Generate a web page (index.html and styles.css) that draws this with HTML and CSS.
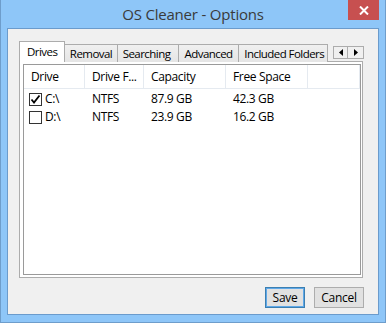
FILE: index.html
```html
<!DOCTYPE html>
<html lang="en">
<head>
    <meta charset="UTF-8">
    <title>OS Cleaner - Options</title>
    <link rel="stylesheet" href="styles.css">
</head>
<body>
    <div class="window">
        <div class="titlebar">
            <span></span>
            <span class="title">OS Cleaner - Options</span>
            <button class="close">
                <svg width="10" height="9" viewBox="0 0 10 9"><path d="M1 0.5 L9 8.5 M9 0.5 L1 8.5" stroke="#fff" stroke-width="2"/></svg>
            </button>
        </div>
        <div class="client">
            <div class="tabstrip">
                <div class="tab active">Drives</div>
                <div class="tab">Removal</div>
                <div class="tab">Searching</div>
                <div class="tab">Advanced</div>
                <div class="tab">Included Folders</div>
                <div class="arrows">
                    <span class="arrow"><svg width="4" height="7" viewBox="0 0 4 7"><path d="M4 0 L0 3.5 L4 7 Z" fill="#000"/></svg></span>
                    <span class="arrow"><svg width="4" height="7" viewBox="0 0 4 7"><path d="M0 0 L4 3.5 L0 7 Z" fill="#000"/></svg></span>
                </div>
            </div>
            <div class="panel">
                <div class="listview">
                    <div class="row header">
                        <div class="cell">Drive</div>
                        <div class="cell">Drive F...</div>
                        <div class="cell">Capacity</div>
                        <div class="cell">Free Space</div>
                        <div class="cell"></div>
                    </div>
                    <div class="row">
                        <div class="cell"><span class="check"><svg width="11" height="11" viewBox="0 0 11 11"><path d="M1.5 5.5 L4 8.5 L9.5 1.5" stroke="#000" stroke-width="1.8" fill="none"/></svg></span>C:\</div>
                        <div class="cell">NTFS</div>
                        <div class="cell">87.9 GB</div>
                        <div class="cell">42.3 GB</div>
                        <div class="cell"></div>
                    </div>
                    <div class="row">
                        <div class="cell"><span class="check"></span>D:\</div>
                        <div class="cell">NTFS</div>
                        <div class="cell">23.9 GB</div>
                        <div class="cell">16.2 GB</div>
                        <div class="cell"></div>
                    </div>
                </div>
            </div>
            <div class="actions">
                <button class="btn default">Save</button>
                <button class="btn cancel">Cancel</button>
            </div>
        </div>
    </div>
</body>
</html>
```

FILE: styles.css
```css
* {
    margin: 0;
    padding: 0;
    box-sizing: border-box;
    font-family: 'Open Sans', 'Noto Sans', sans-serif;
}

body {
    width: 386px;
    height: 323px;
    overflow: hidden;
}

.window {
    display: flex;
    flex-direction: column;
    height: 323px;
    background: #8ec6f8;
    border: 1px solid #6e9dcb;
    border-top: none;
    padding: 0 6px 7px 6px;
}

.titlebar {
    display: grid;
    grid-template-columns: 1fr auto 1fr;
    align-items: start;
    height: 30px;
}

.title {
    font-size: 15px;
    color: #3a3a3a;
    padding-top: 4px;
    letter-spacing: -0.2px;
}

.close {
    justify-self: end;
    width: 31px;
    height: 20px;
    border: none;
    background: #c75050;
    display: flex;
    align-items: center;
    justify-content: center;
}

.client {
    flex: 1;
    display: flex;
    flex-direction: column;
    background: #f0f0f0;
    border: 1px solid #6b9bcc;
    padding: 12px 14px 6px 11px;
    font-size: 12px;
    color: #000;
}

.tabstrip {
    display: flex;
    align-items: flex-end;
    height: 21px;
    position: relative;
    z-index: 1;
}

.tab {
    height: 18px;
    padding: 0 0 0 5px;
    border: 1px solid #acacac;
    border-bottom: none;
    border-left: none;
    background: linear-gradient(#f0f0f0, #e5e5e5);
    font-size: 11.5px;
    line-height: 17px;
    letter-spacing: -0.55px;
    white-space: nowrap;
    overflow: hidden;
}

.tab:nth-child(2) { width: 53px; }
.tab:nth-child(3) { width: 62px; }
.tab:nth-child(4) { width: 60px; }
.tab:nth-child(5) { width: 89px; }

.tab.active {
    width: 46px;
    height: 21px;
    padding-left: 7px;
    background: #fff;
    border-left: 1px solid #acacac;
    line-height: 19px;
}

.arrows {
    display: flex;
    margin-left: 5px;
    align-self: flex-start;
    margin-top: 5px;
}

.arrow {
    width: 15px;
    height: 13px;
    border: 1px solid #acacac;
    background: #f0f0f0;
    display: flex;
    align-items: center;
    justify-content: center;
}

.arrow + .arrow {
    width: 16px;
    border-left: none;
}

.panel {
    width: 344px;
    height: 217px;
    margin-top: -1px;
    background: #fff;
    border: 1px solid #acacac;
    padding: 2px 1px 2px 3px;
}

.listview {
    height: 100%;
    border: 1px solid #9a9a9a;
    background: #fff;
}

.row {
    display: grid;
    grid-template-columns: 61px 59px 82px 82px 1fr;
    height: 18px;
    line-height: 18px;
}

.row.header {
    height: 24px;
    line-height: 23px;
    border-bottom: 1px solid #e5eaf0;
    margin-bottom: 1px;
}

.header .cell {
    border-right: 1px solid #e5eaf0;
}

.header .cell:last-child {
    width: 52px;
}

.cell {
    padding-left: 7px;
    white-space: nowrap;
    letter-spacing: -0.35px;
    display: flex;
    align-items: center;
}

.row:not(.header) .cell:first-child {
    padding-left: 5px;
}

.check {
    width: 13px;
    height: 13px;
    border: 1px solid #333;
    background: #fff;
    margin-right: 3px;
    display: flex;
    align-items: center;
    justify-content: center;
}

.actions {
    display: flex;
    justify-content: flex-end;
    gap: 9px;
    padding-top: 9px;
}

.btn {
    height: 21px;
    font-size: 12px;
    background: #e1e1e1;
    border: 1px solid #adadad;
    color: #000;
    letter-spacing: -0.3px;
}

.btn.default {
    width: 40px;
    border-color: #3c7fb1;
    box-shadow: inset 0 0 0 1px #5fa8e8;
}

.btn.cancel {
    width: 50px;
}
```
